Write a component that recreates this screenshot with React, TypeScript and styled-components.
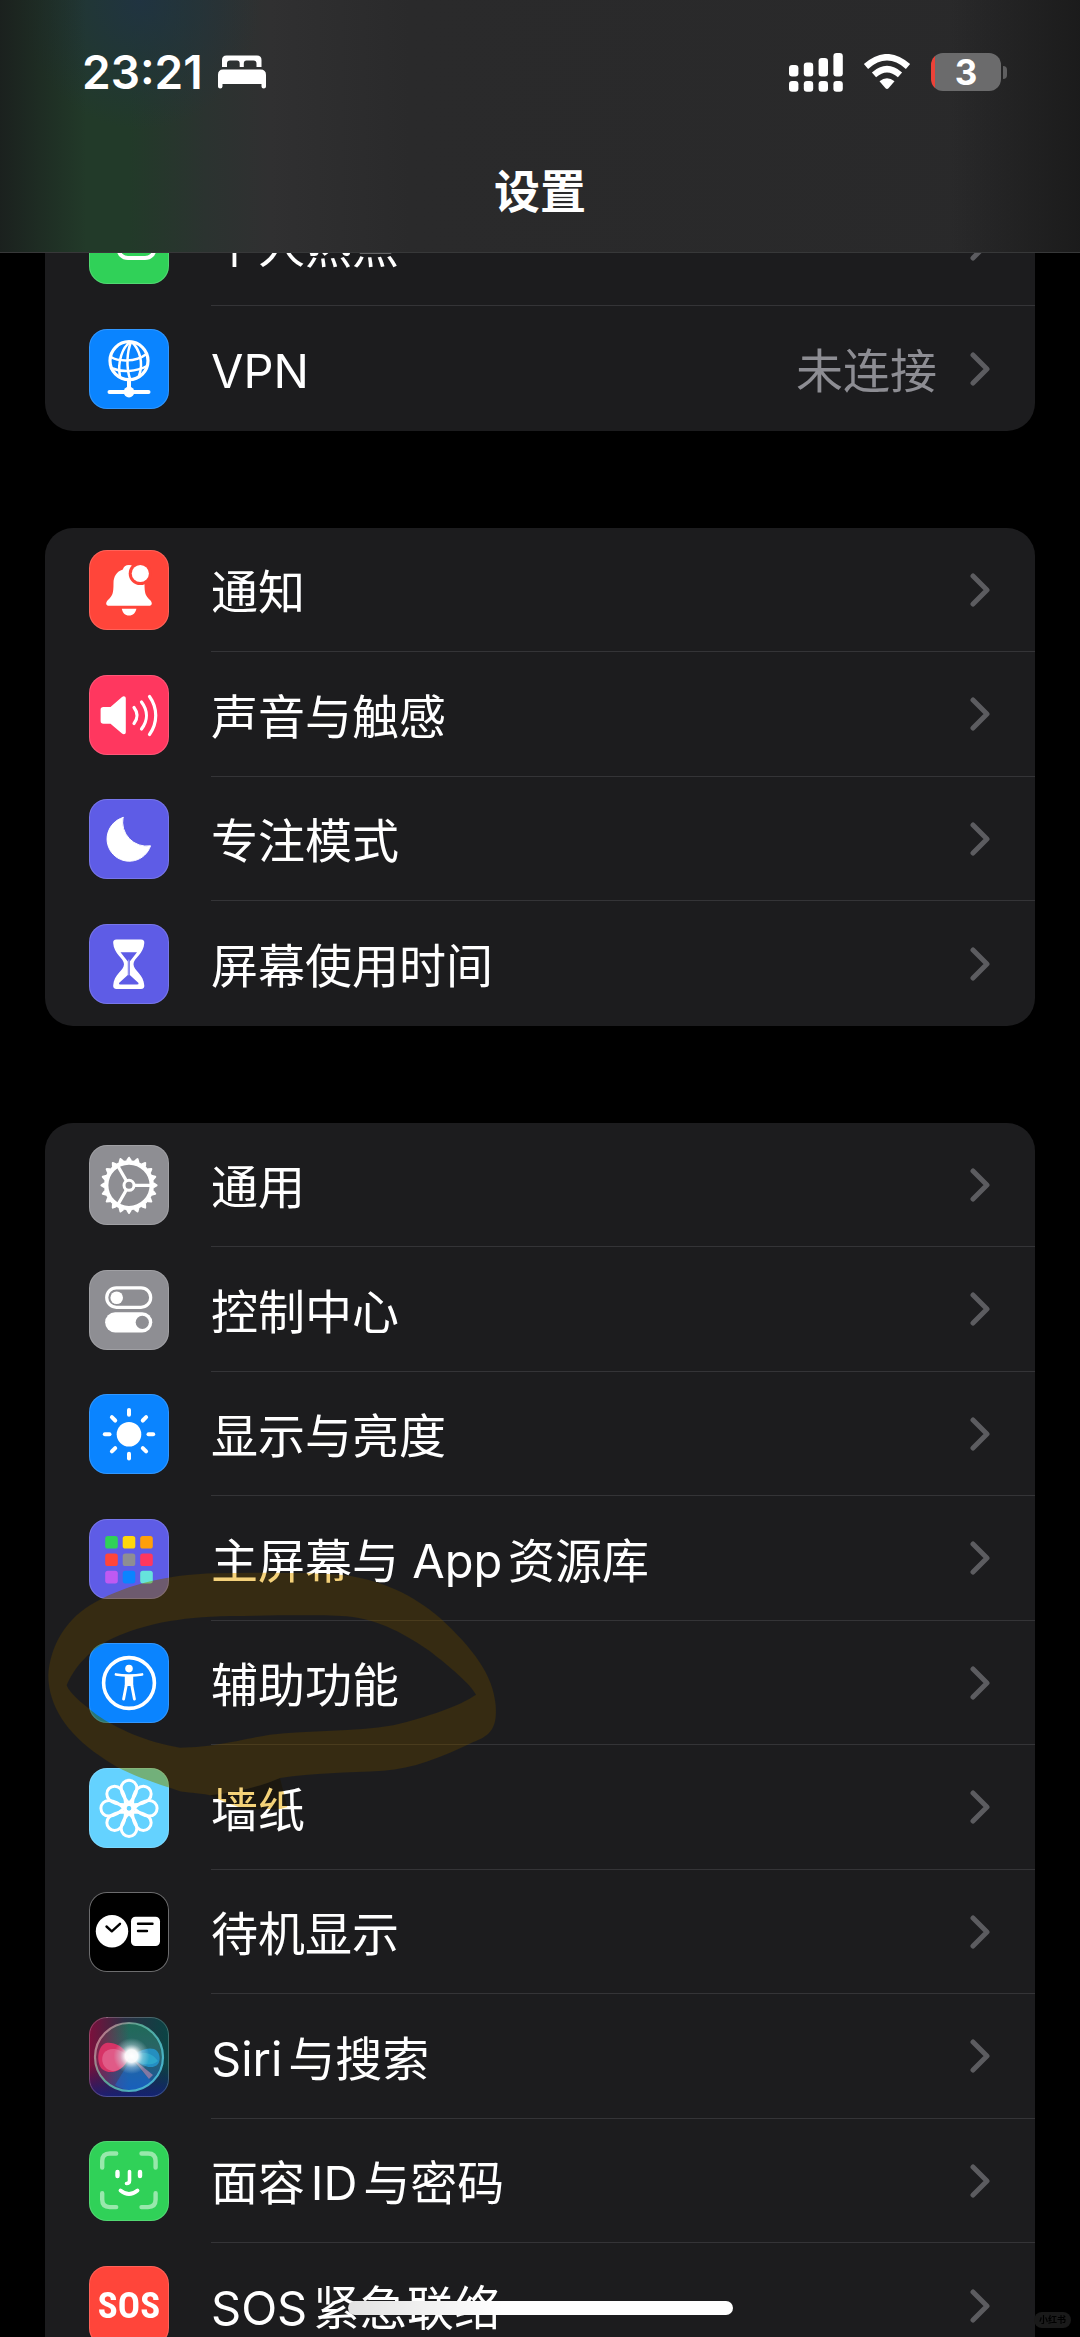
import React from "react";
import styled, { createGlobalStyle } from "styled-components";

const GlobalStyle = createGlobalStyle`
  *, *::before, *::after { box-sizing: border-box; }
  html, body { margin: 0; padding: 0; background: #000; }
  body {
    font-family: Inter, "Noto Sans CJK SC", sans-serif;
    color: #fff;
    text-autospace: normal;
  }
`;

const Screen = styled.div`
  position: relative;
  height: 100vh;
  overflow: hidden;
  background: #000;
`;

const Header = styled.header`
  position: fixed;
  z-index: 2;
  top: 0;
  left: 0;
  right: 0;
  border-bottom: 1px solid #373839;
  background:
    linear-gradient(90deg, transparent 88%, rgba(24, 24, 24, 0.8) 100%),
    linear-gradient(90deg, rgba(26, 30, 29, 0.9) 0%, rgba(26, 30, 29, 0) 8%),
    radial-gradient(ellipse 120px 130px at 140px 0, rgba(32, 51, 66, 0.95), rgba(32, 51, 66, 0)),
    linear-gradient(90deg, #223a29 0%, #223a29 12%, #2b3330 19%, #303031 25%, #2a2a2b 38%, #29292a 100%);
`;

const StatusBar = styled.div`
  display: flex;
  align-items: center;
  justify-content: space-between;
  height: 144px;
  padding: 0 73px 0 82px;
`;

const StatusSide = styled.div<{ $gap: number }>`
  display: flex;
  align-items: center;
  gap: ${(p) => p.$gap}px;
`;

const Clock = styled.time`
  font-size: 46px;
  font-weight: 600;
  line-height: 48px;
`;

const Battery = styled.div`
  display: flex;
  align-items: center;
  gap: 2px;
`;

const BatteryBody = styled.span`
  width: 70px;
  height: 38px;
  border-radius: 12px;
  background: linear-gradient(90deg, #ec4238 4px, #6b6b6c 4px);
  font-size: 35px;
  font-weight: 700;
  line-height: 38px;
  text-align: center;
`;

const BatteryNub = styled.span`
  width: 4px;
  height: 13px;
  border-radius: 0 6px 6px 0;
  background: #5f5f60;
`;

const Title = styled.h1`
  margin: 0;
  height: 108px;
  padding-top: 17px;
  font-size: 46px;
  font-weight: 600;
  line-height: 60px;
  text-align: center;
`;

const Groups = styled.main`
  display: flex;
  flex-direction: column;
  gap: 97px;
  padding: 182px 45px 0;
`;

const Group = styled.ul`
  margin: 0;
  padding: 0;
  list-style: none;
  border-radius: 28px;
  background: #1c1c1e;
`;

const Item = styled.li<{ $marked?: boolean }>`
  position: ${(p) => (p.$marked ? "relative" : "static")};
  height: 124px;
  &:nth-child(even) { height: 125px; }
`;

const RowLink = styled.a`
  display: flex;
  align-items: center;
  height: 100%;
  padding-left: 44px;
  gap: 42px;
  color: inherit;
  text-decoration: none;
`;

const RowBody = styled.span`
  flex: 1;
  align-self: stretch;
  display: flex;
  align-items: center;
  gap: 33px;
  padding-right: 45px;
  font-size: 47px;
  line-height: 64px;
  ${Item}:not(:last-child) & { border-bottom: 1px solid #343437; }
`;

const Label = styled.span`
  flex: 1;
  padding-top: 5px;
  white-space: nowrap;
`;

const Value = styled.span`
  padding-top: 5px;
  color: #8d8d93;
`;

const Tile = styled.span<{ $bg: string; $ring?: string }>`
  display: flex;
  align-items: center;
  justify-content: center;
  width: 80px;
  height: 80px;
  border-radius: 18px;
  overflow: hidden;
  background: ${(p) => p.$bg};
  box-shadow: inset 0 0 0 1px ${(p) => p.$ring ?? "rgba(255, 255, 255, 0.16)"};
  svg { display: block; }
`;

const SosText = styled.span`
  font-family: "Liberation Sans Narrow", "Roboto Condensed", "Open Sans Condensed", Roboto, sans-serif;
  font-size: 37px;
  font-weight: 700;
  line-height: 80px;
`;

const MultiplyLayer = styled.svg`
  position: absolute;
  left: 0;
  top: -62px;
  width: 460px;
  height: 250px;
  pointer-events: none;
  mix-blend-mode: multiply;
`;

const ScreenLayer = styled(MultiplyLayer)`
  mix-blend-mode: screen;
`;

const HomeIndicator = styled.div`
  position: fixed;
  z-index: 3;
  bottom: 22px;
  left: 50%;
  width: 385px;
  height: 14px;
  margin-left: -192px;
  border-radius: 7px;
  background: linear-gradient(90deg, #e2e2e2, #fff 40%);
`;

const Watermark = styled.span`
  position: fixed;
  z-index: 3;
  right: 9px;
  bottom: 9px;
  padding: 0 5px;
  border-radius: 8px;
  background: #1a1a1a;
  color: #000;
  font-size: 9px;
  font-weight: 700;
  line-height: 16px;
`;

type GlyphProps = { children: React.ReactNode };
const Glyph = ({ children }: GlyphProps) => (
  <svg width="80" height="80" viewBox="0 0 80 80" fill="none" stroke="none" strokeLinecap="round" strokeLinejoin="round" aria-hidden="true">
    {children}
  </svg>
);

const Hotspot = () => (
  <Glyph>
    <rect x="29" y="30" width="37" height="24" rx="10" stroke="#fff" strokeWidth="4" />
    <rect x="13" y="25" width="37" height="20" rx="10" stroke="#fff" strokeWidth="4" />
  </Glyph>
);

const Globe = () => (
  <Glyph>
    <g stroke="#fff" strokeWidth="2.5">
      <circle cx="40" cy="31.7" r="19" strokeWidth="3.2" />
      <path d="M41 13C34 18 28 32 31 48" />
      <path d="M42 13C38 23 37 38 41 50" />
      <path d="M43 13C50 20 55 33 50 47" />
      <path d="M22 28C28 32 46 34 57.500 25" />
      <path d="M22 39C33 43.500 47 43 58 37" />
    </g>
    <path d="M40 51V60" stroke="#fff" strokeWidth="4" />
    <path d="M20.500 63H59.500" stroke="#fff" strokeWidth="4" />
    <circle cx="40" cy="63" r="5.400" fill="#fff" />
  </Glyph>
);

const Bell = () => (
  <Glyph>
    <path d="M40 15C36.500 15 34.500 17 33.800 19.500C27.500 21.500 24.500 27 24.500 33C24.500 44 23.500 45.500 19 50C16 53 17 55.800 20 55.800H60C63 55.800 64 53 61 50C56.500 45.500 55.500 44 55.500 33C55.500 27 52.500 21.500 46.200 19.500C45.500 17 43.500 15 40 15Z" fill="#fff" />
    <circle cx="51.300" cy="23.500" r="11.600" fill="#ff453a" />
    <circle cx="51.300" cy="23.500" r="8.600" fill="#fff" />
    <path d="M32.800 58.800H47.400C46.500 63 44 65.600 40 65.600C36 65.600 33.600 63 32.800 58.800Z" fill="#fff" />
  </Glyph>
);

const Speaker = () => (
  <Glyph>
    <path d="M14.500 32H21.500L33 22C34.800 20.600 36.800 21.400 36.800 23.500V57C36.800 59.200 34.800 60 33 58.500L21.500 48.700H14.500C12.500 48.700 11.600 47.700 11.600 46V34.700C11.600 33 12.500 32 14.500 32Z" fill="#fff" />
    <g stroke="#fff" strokeWidth="3.2">
      <path d="M45 32.500C48.800 37.500 48.800 43.500 45 48.500" />
      <path d="M52.500 27C59 35.500 59 45.500 52.500 54" />
      <path d="M60.500 21.500C68.800 33 68.800 48 60.500 59.500" />
    </g>
  </Glyph>
);

const Moon = () => (
  <Glyph>
    <path d="M34 18.500A24 24 0 0 0 61.500 46.800A22.300 22.300 0 1 1 34 18.500Z" fill="#fff" stroke="#fff" strokeWidth="1" />
  </Glyph>
);

const Hourglass = () => (
  <Glyph>
    <path d="M27.500 15.500H52C54.500 15.500 55.500 17 55.300 19C54.800 30 44.500 34 44.500 40.300C44.500 46.500 54.800 50.500 55.300 61.500C55.500 63.800 54.300 65 52 65H27.500C25.300 65 24 63.800 24.200 61.500C24.700 50.500 35 46.500 35 40.300C35 34 24.700 30 24.200 19C24 17 25 15.500 27.500 15.500Z" fill="#fff" />
    <path d="M31.500 28.300H48L40.800 37.500V51L49.500 59Q50 60.500 48 60.500H31.500Q29.500 60.500 30 59L38.800 51V37.500Z" fill="#5e5ce6" />
    <path d="M39.800 36V51" stroke="#a9a8f2" strokeWidth="1" />
  </Glyph>
);

const Gear = () => (
  <Glyph>
    <g stroke="#fff">
      <circle cx="40" cy="40.300" r="22.800" strokeWidth="4.400" />
      <circle cx="40" cy="40.300" r="5" strokeWidth="3" />
      {Array.from({ length: 20 }, (_, i) => (
        <path key={i} d="M65 38.600L67.600 40.300L65 42Z" fill="#fff" strokeWidth="2" transform={`rotate(${i * 18} 40 40.300)`} />
      ))}
      {[0, 120, 240].map((a) => (
        <path key={a} d="M46 40.300H62" strokeWidth="3.200" transform={`rotate(${a} 40 40.300)`} />
      ))}
    </g>
  </Glyph>
);

const Toggles = () => (
  <Glyph>
    <rect x="17.700" y="17.900" width="44" height="19.400" rx="9.700" stroke="#fff" strokeWidth="3.200" />
    <circle cx="27.700" cy="27.700" r="6.300" fill="#fff" />
    <rect x="16.100" y="42.200" width="47.200" height="20.200" rx="10.100" fill="#fff" />
    <circle cx="53.300" cy="52.300" r="6.600" fill="#8e8e93" />
  </Glyph>
);

const Sun = () => (
  <Glyph>
    <circle cx="40" cy="40.300" r="12.300" fill="#fff" />
    {Array.from({ length: 8 }, (_, i) => (
      <path key={i} d="M59.500 40.300H64.200" stroke="#fff" strokeWidth="4" transform={`rotate(${i * 45} 40 40.300)`} />
    ))}
  </Glyph>
);

const APP_COLORS = ["#30d158", "#ffd60a", "#ff9f0a", "#ff453a", "#8e8e93", "#ff375f", "#bf5af2", "#0a84ff", "#66e4dc"];
const AppGrid = () => (
  <Glyph>
    {APP_COLORS.map((c, i) => (
      <rect key={c} x={16.2 + (i % 3) * 17.5} y={17 + Math.floor(i / 3) * 17.4} width="12.600" height="12.600" rx="2.600" fill={c} />
    ))}
  </Glyph>
);

const Accessibility = () => (
  <Glyph>
    <circle cx="40" cy="40" r="25.400" stroke="#fff" strokeWidth="3.600" />
    <circle cx="40" cy="25.600" r="3.800" fill="#fff" />
    <path d="M27 31.500C34 33 46 33 53 31.500" stroke="#fff" strokeWidth="2.800" />
    <path d="M35.800 32H44.200V43H35.800Z" fill="#fff" />
    <path d="M37.300 42L34.600 56M42.700 42L45.400 56" stroke="#fff" strokeWidth="2.900" />
  </Glyph>
);

const Flower = () => (
  <Glyph>
    <g stroke="#fff" strokeWidth="3">
      {Array.from({ length: 8 }, (_, i) => (
        <path key={i} d="M42 37C35 31 32.200 25 32.200 20A7.800 7.800 0 0 1 47.800 20C47.800 25 45 31 38 37" transform={`rotate(${i * 45} 40 40.300)`} />
      ))}
      <circle cx="40" cy="40.300" r="4.300" />
    </g>
  </Glyph>
);

const Standby = () => (
  <Glyph>
    <circle cx="23" cy="39.300" r="16.200" fill="#fff" />
    <path d="M17.500 34.500L22.800 39.300L31 31.800" stroke="#000" strokeWidth="2.400" />
    <rect x="42" y="24.700" width="29" height="29.300" rx="4.500" fill="#fff" />
    <path d="M49 31.700H63.500M49 39H58" stroke="#000" strokeWidth="2.400" />
  </Glyph>
);

const Siri = () => (
  <Glyph>
    <defs>
      <linearGradient id="siriBase" x1="0" y1="0" x2="1" y2="0">
        <stop offset="0" stopColor="#7d0f3c" />
        <stop offset="0.45" stopColor="#2b2f43" />
        <stop offset="1" stopColor="#0a4444" />
      </linearGradient>
      <linearGradient id="siriFloor" x1="0" y1="0" x2="0" y2="1">
        <stop offset="0.6" stopColor="#11165c" stopOpacity="0" />
        <stop offset="1" stopColor="#14207a" stopOpacity="0.9" />
      </linearGradient>
      <linearGradient id="siriRim" x1="0" y1="0" x2="1" y2="0.6">
        <stop offset="0" stopColor="#ef7592" />
        <stop offset="0.5" stopColor="#5fb8a0" />
        <stop offset="1" stopColor="#4fc4dc" />
      </linearGradient>
      <linearGradient id="siriOrb" x1="0" y1="0" x2="0" y2="1">
        <stop offset="0" stopColor="#1f6a58" />
        <stop offset="0.45" stopColor="#2b6468" />
        <stop offset="1" stopColor="#1453a8" />
      </linearGradient>
      <linearGradient id="siriWarm" x1="0" y1="0" x2="1" y2="0">
        <stop offset="0" stopColor="#8a1746" stopOpacity="0.9" />
        <stop offset="0.5" stopColor="#8a1746" stopOpacity="0" />
      </linearGradient>
      <radialGradient id="siriGlow">
        <stop offset="0" stopColor="#fff" />
        <stop offset="0.35" stopColor="#fff" stopOpacity="0.95" />
        <stop offset="0.65" stopColor="#cfe8ee" stopOpacity="0.4" />
        <stop offset="1" stopColor="#cfe8ee" stopOpacity="0" />
      </radialGradient>
    </defs>
    <rect width="80" height="80" fill="url(#siriBase)" />
    <rect width="80" height="80" fill="url(#siriFloor)" />
    <circle cx="40" cy="40" r="34" fill="url(#siriOrb)" />
    <circle cx="40" cy="40" r="34" fill="url(#siriWarm)" />
    <path d="M40 40C34 28 24 25 17 26C8 29 7 46 13 52C20 58 34 56 40 40Z" fill="#d63366" />
    <path d="M40 40C30 30 20 30 15 36C10 44 16 55 26 54C34 52 38 46 40 40Z" fill="#ee8ab0" opacity="0.45" />
    <path d="M42 40C48 34 58 30 65 32C71 34 72 43 69 47C63 54 50 48 42 40Z" fill="#2596cf" opacity="0.85" />
    <path d="M42 40C52 34 62 34 69 44C62 50 50 48 42 40Z" fill="#39c4d8" opacity="0.45" />
    <path d="M42 42L26 68C38 76 54 74 62 64Z" fill="#1c6bd2" opacity="0.5" />
    <path d="M43 41L64 58L60 62Z" fill="#d58fb8" opacity="0.55" />
    <circle cx="40" cy="40" r="34" stroke="url(#siriRim)" strokeWidth="2.200" opacity="0.85" />
    <circle cx="42.500" cy="39" r="18" fill="url(#siriGlow)" />
    <rect x="0.500" y="0.500" width="79" height="79" rx="17.500" stroke="#fff" strokeOpacity="0.22" />
  </Glyph>
);

const FaceId = () => (
  <Glyph>
    <g stroke="#fff" strokeWidth="4.400">
      <path opacity="0.5" d="M13.200 26.500V20Q13.200 12.500 20.700 12.500H27.200M52.500 12.500H59Q66.600 12.500 66.600 20V26.500M66.600 52.200V58.600Q66.600 66.100 59 66.100H52.500M27.200 66.100H20.700Q13.200 66.100 13.200 58.600V52.200" />
      <path d="M28.500 31V35M51 31V35" />
      <path d="M40.500 30.500V39.500Q40.500 42.500 37.500 42.500" strokeWidth="3.600" />
      <path d="M31.500 49.500Q40 56.500 48.500 49.500" strokeWidth="3.800" />
    </g>
  </Glyph>
);

const Bed = () => (
  <svg width="50" height="34" viewBox="0 0 50 34" fill="#fff" aria-hidden="true">
    <path d="M5 12V5Q5 0.500 9.500 0.500H40Q44.500 0.500 44.500 5V12H39.500V8.500Q39.500 5.500 36.500 5.500H29.500Q26.800 5.500 26.800 8.500V12H22.700V8.500Q22.700 5.500 20 5.500H13Q10 5.500 10 8.500V12Z" />
    <path d="M6 14.500H43.500Q49 14.500 49 20V31.500Q49 33.500 46.800 33.500Q44.500 33.500 44.500 31.500V29H5.500V31.500Q5.500 33.500 3.200 33.500Q1 33.500 1 31.500V20Q1 14.500 6 14.500Z" />
  </svg>
);

const Signal = () => (
  <svg width="54" height="39" viewBox="0 0 54 39" fill="#fff" aria-hidden="true">
    {[12, 9.5, 5, 0].map((top, i) => (
      <g key={i}>
        <rect x={i * 14.8} y={top} width="9.400" height={23.5 - top} rx="3.200" />
        <rect x={i * 14.8} y="28" width="9.400" height="10.800" rx="3.200" />
      </g>
    ))}
  </svg>
);

const Wifi = () => (
  <svg width="48" height="36" viewBox="0 0 48 36" fill="none" stroke="#fff" aria-hidden="true">
    <path d="M3 12.500Q24 -6 45 12.500" strokeWidth="6.400" />
    <path d="M11 20.800Q24 9.500 37 20.800" strokeWidth="6.400" />
    <path d="M16.500 27.200Q24 21.500 31.500 27.200L25.500 34.200Q24 35.600 22.500 34.200Z" fill="#fff" stroke="none" />
  </svg>
);

const Chevron = () => (
  <svg width="20" height="34" viewBox="0 0 20 34" fill="none" stroke="#5c5c60" strokeWidth="5" strokeLinecap="round" strokeLinejoin="round" aria-hidden="true">
    <path d="M3 3L17 17L3 31" />
  </svg>
);

const STROKE_PATH =
  "M55 520C60 440 100 360 180 310C270 255 400 217 560 214C700 210 860 212 940 219C1060 235 1150 280 1230 348C1330 440 1390 520 1397 610C1402 680 1380 700 1330 720C1230 768 1150 800 1060 806C950 812 850 812 750 828C700 850 620 872 540 880C500 872 470 872 450 868C370 840 280 815 210 762C110 695 55 610 55 520Z M110 550C130 500 180 440 250 408C340 368 440 345 600 342C740 340 870 338 950 343C1050 352 1130 400 1200 448C1260 495 1320 545 1338 578C1290 612 1190 645 1090 670C970 690 840 685 720 698C620 715 560 735 450 737C350 720 260 680 200 638C150 600 120 575 110 550Z";
const TAIL_PATH = "M540 880C620 872 700 850 750 828L772 915Q700 940 640 920Q590 905 540 880Z";

// Highlighter ring: multiply tints the light text under it, screen lifts the dark card.
const MarkerCircle = () => (
  <>
    <MultiplyLayer viewBox="45 171 1380 750" aria-hidden="true">
      <path d={STROKE_PATH} fillRule="evenodd" fill="rgb(242, 205, 120)" />
      <path d={TAIL_PATH} fill="rgb(244, 210, 120)" />
    </MultiplyLayer>
    <ScreenLayer viewBox="45 171 1380 750" aria-hidden="true">
      <path d={STROKE_PATH} fillRule="evenodd" fill="rgb(30, 22, 3)" />
    </ScreenLayer>
  </>
);

type Entry = {
  id: string;
  label: string;
  bg: string;
  ring?: string;
  icon: React.ReactNode;
  value?: string;
  marked?: boolean;
};

const GROUPS: Entry[][] = [
  [
    { id: "hotspot", label: "个人热点", bg: "#30d158", icon: <Hotspot /> },
    { id: "vpn", label: "VPN", bg: "#0a84ff", icon: <Globe />, value: "未连接" },
  ],
  [
    { id: "notifications", label: "通知", bg: "#ff453a", icon: <Bell /> },
    { id: "sounds", label: "声音与触感", bg: "#ff375f", icon: <Speaker /> },
    { id: "focus", label: "专注模式", bg: "#5e5ce6", icon: <Moon /> },
    { id: "screen-time", label: "屏幕使用时间", bg: "#5e5ce6", icon: <Hourglass /> },
  ],
  [
    { id: "general", label: "通用", bg: "#8e8e93", icon: <Gear /> },
    { id: "control-center", label: "控制中心", bg: "#8e8e93", icon: <Toggles /> },
    { id: "display", label: "显示与亮度", bg: "#0a84ff", icon: <Sun /> },
    { id: "home-screen", label: "主屏幕与 App资源库", bg: "#5e5ce6", icon: <AppGrid /> },
    { id: "accessibility", label: "辅助功能", bg: "#0a84ff", icon: <Accessibility />, marked: true },
    { id: "wallpaper", label: "墙纸", bg: "#64d2ff", icon: <Flower /> },
    { id: "standby", label: "待机显示", bg: "#000", ring: "#6c6c6e", icon: <Standby /> },
    { id: "siri", label: "Siri与搜索", bg: "#222", icon: <Siri /> },
    { id: "face-id", label: "面容ID与密码", bg: "#30d158", icon: <FaceId /> },
    { id: "sos", label: "SOS紧急联络", bg: "#ff453a", icon: <SosText>SOS</SosText> },
  ],
];

const Row = ({ entry }: { entry: Entry }) => (
  <Item $marked={entry.marked}>
    <RowLink href={`#${entry.id}`}>
      <Tile $bg={entry.bg} $ring={entry.ring}>{entry.icon}</Tile>
      <RowBody>
        <Label>{entry.label}</Label>
        {entry.value && <Value>{entry.value}</Value>}
        <Chevron />
      </RowBody>
    </RowLink>
    {entry.marked && <MarkerCircle />}
  </Item>
);

export default function App() {
  return (
    <Screen>
      <GlobalStyle />
      <Header>
        <StatusBar>
          <StatusSide $gap={14}>
            <Clock>23:21</Clock>
            <Bed />
          </StatusSide>
          <StatusSide $gap={20}>
            <Signal />
            <Wifi />
            <Battery>
              <BatteryBody>3</BatteryBody>
              <BatteryNub />
            </Battery>
          </StatusSide>
        </StatusBar>
        <Title>设置</Title>
      </Header>
      <Groups>
        {GROUPS.map((entries) => (
          <Group key={entries[0].id}>
            {entries.map((entry) => (
              <Row key={entry.id} entry={entry} />
            ))}
          </Group>
        ))}
      </Groups>
      <HomeIndicator />
      <Watermark>小红书</Watermark>
    </Screen>
  );
}
